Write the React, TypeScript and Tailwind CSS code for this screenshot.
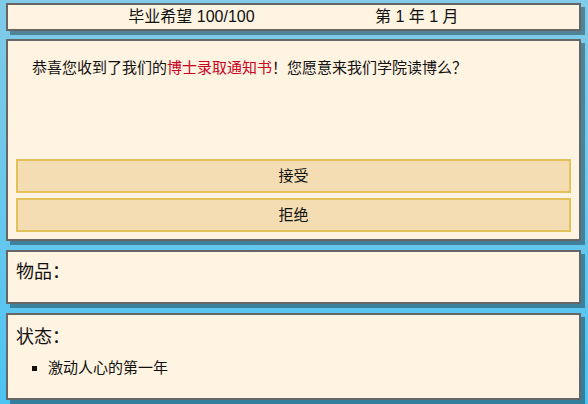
import React from "react";

const panel =
  "bg-[#fff3e1] border-2 border-[#666666] shadow-[4px_4px_0_rgba(0,0,0,0.35)]";

const App: React.FC = () => {
  const choices = ["接受", "拒绝"];

  return (
    <div
      className="w-full h-screen bg-gradient-to-b from-[#80cbe8] to-[#4cc4f2] pt-[3px] pl-[6px] pr-[7px] flex flex-col gap-[8px] text-[#111]"
      style={{ fontFamily: '"Liberation Sans", "Noto Sans CJK SC", sans-serif' }}
    >
      {/* status bar */}
      <div className={`${panel} h-[28px] flex items-center justify-evenly text-[16px]`}>
        <span>毕业希望 100/100</span>
        <span>第 1 年 1 月</span>
      </div>

      {/* event */}
      <div className={`${panel} h-[202px] flex flex-col p-2 pb-[7px]`}>
        <div className="flex-1 px-4 pt-[9px] text-[15px] leading-5">
          恭喜您收到了我们的<span className="text-[#c8001e]">博士录取通知书</span>！您愿意来我们学院读博么？
        </div>
        <div className="flex flex-col gap-[5px]">
          {choices.map((c) => (
            <button
              key={c}
              className="h-[34px] w-full bg-[#f5ddb3] border-2 border-[#e3c15a] text-[15px] text-[#111]"
            >
              {c}
            </button>
          ))}
        </div>
      </div>

      {/* items */}
      <div className={`${panel} h-[54px] mt-px px-2 pt-[8px]`}>
        <div className="text-[18px] leading-6">物品：</div>
      </div>

      {/* status */}
      <div className={`${panel} h-[87px] mt-px px-2 pt-[10px]`}>
        <div className="text-[18px] leading-6">状态：</div>
        <ul className="list-[square] pl-8 mt-[9px] text-[15px] leading-5">
          <li>激动人心的第一年</li>
        </ul>
      </div>
    </div>
  );
};

export default App;
